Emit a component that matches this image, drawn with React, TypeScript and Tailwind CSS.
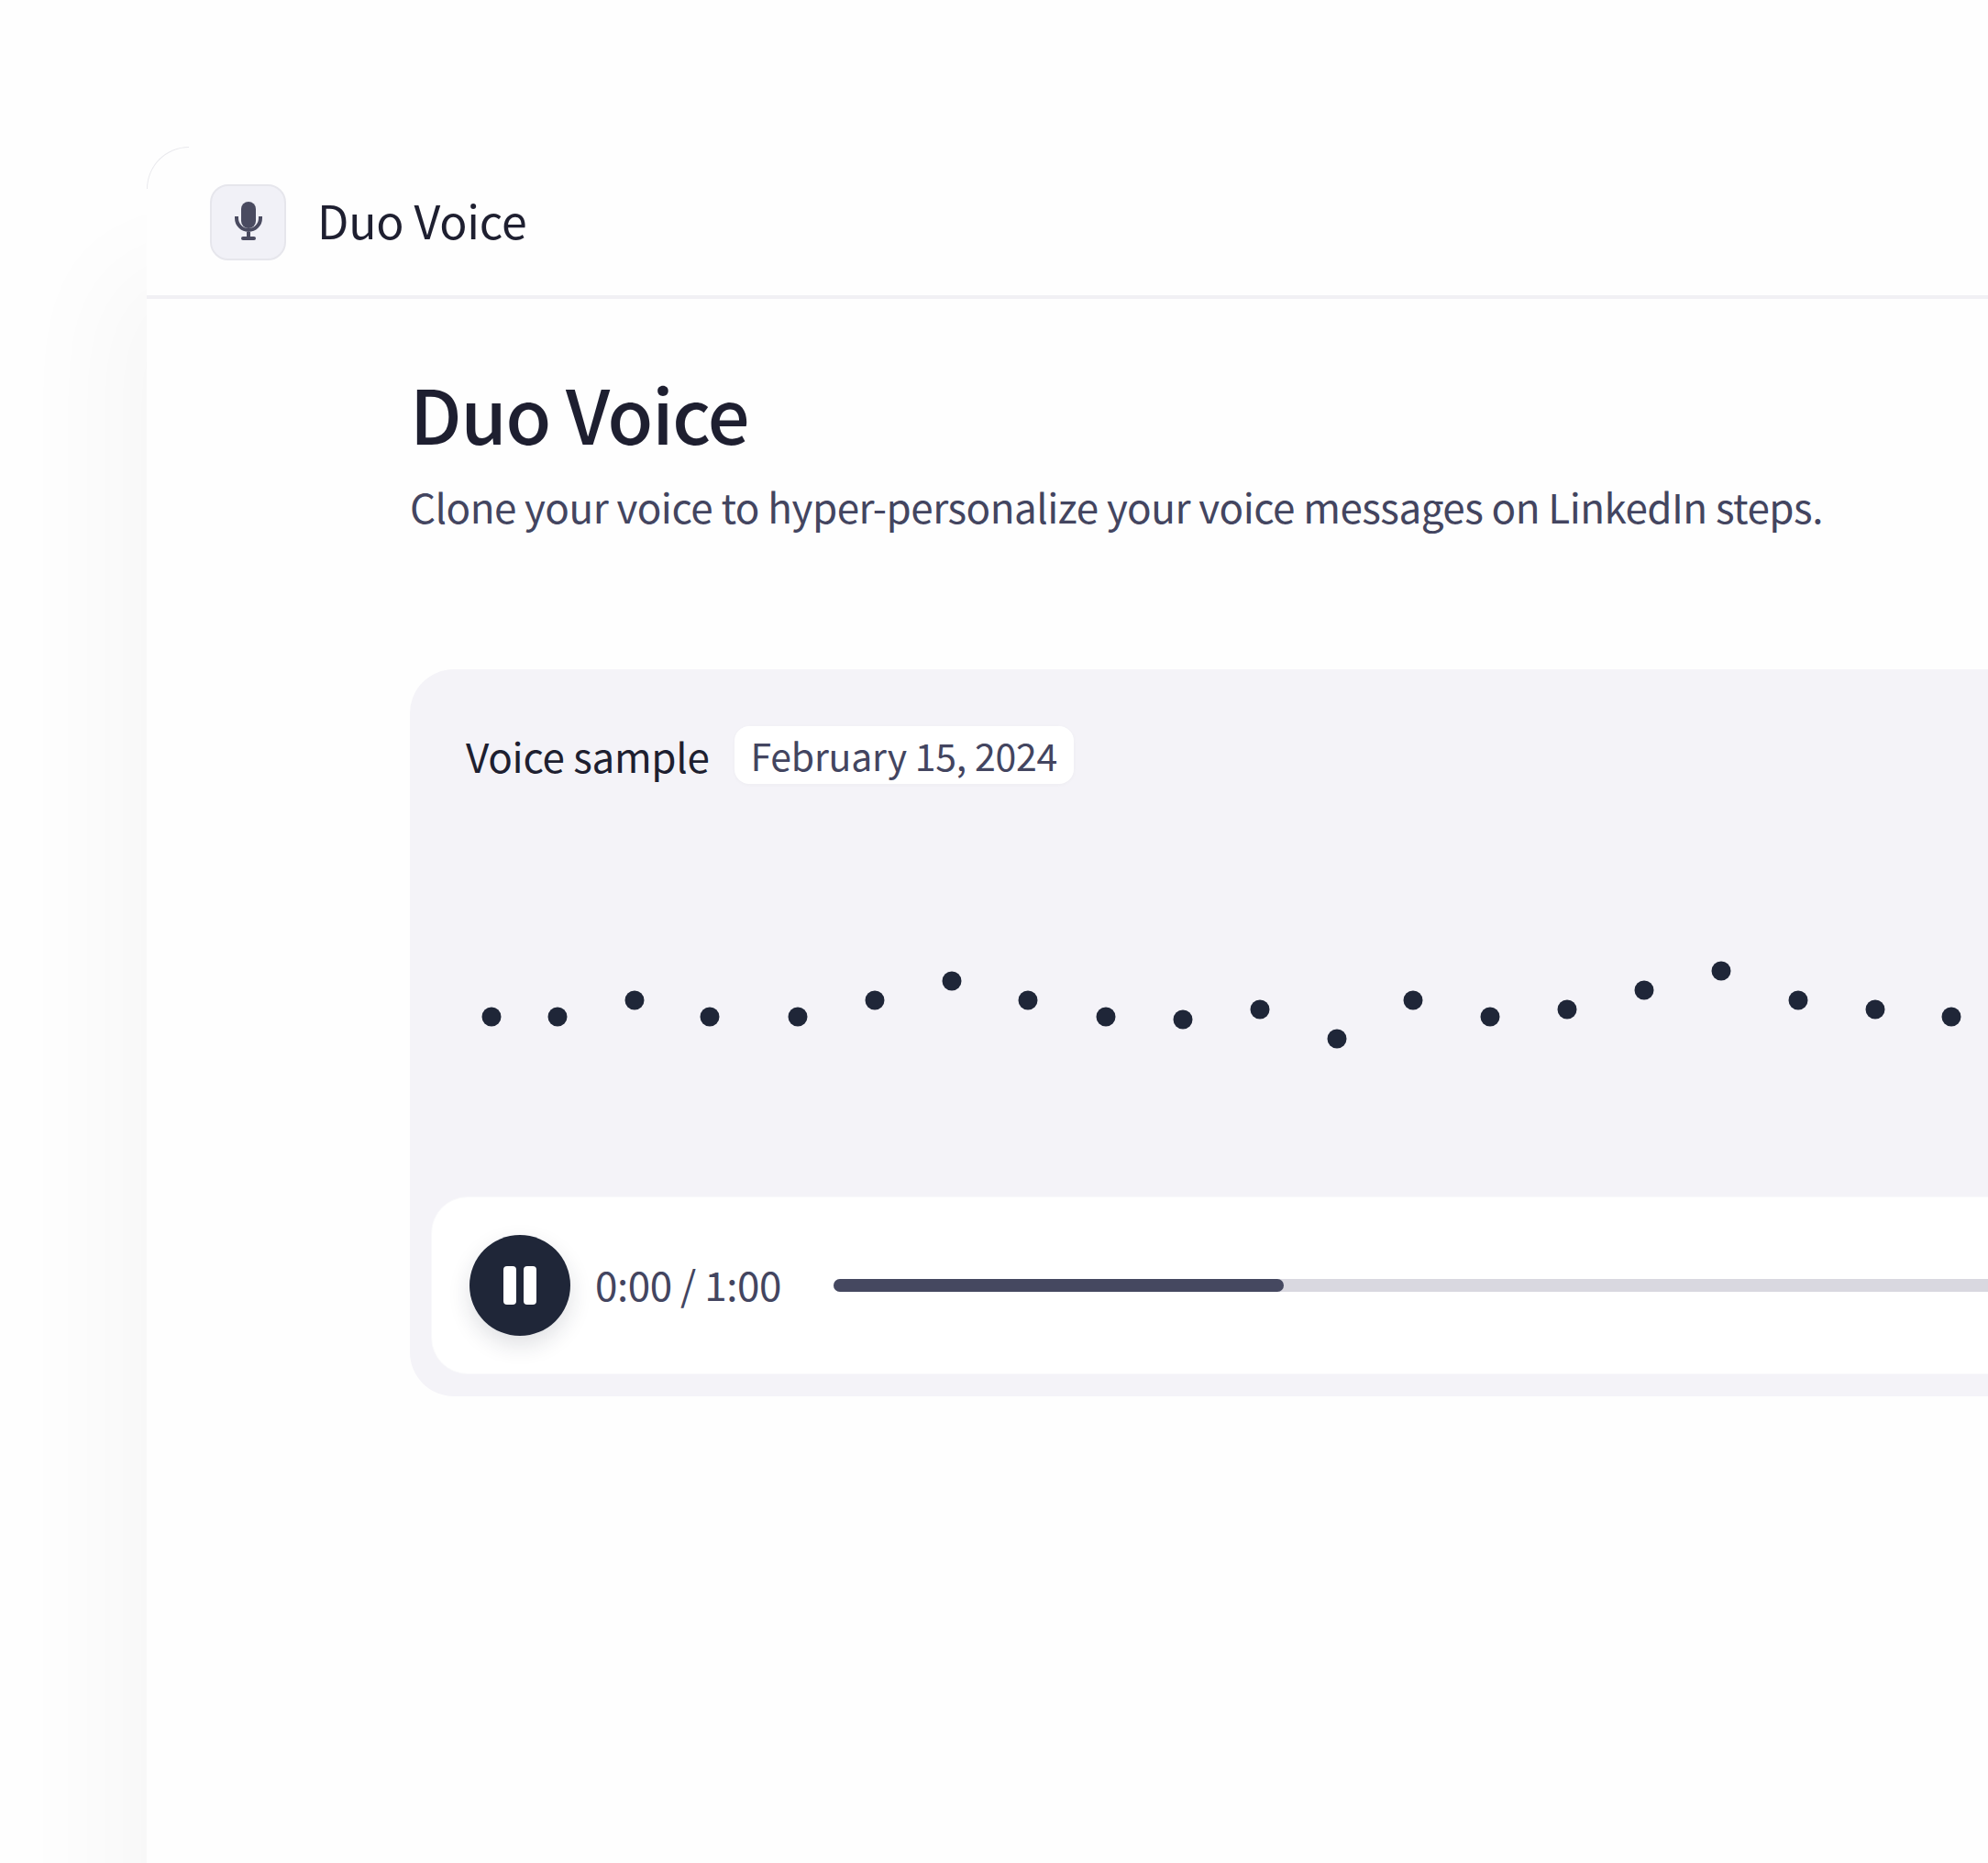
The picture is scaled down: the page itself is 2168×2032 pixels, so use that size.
const dots = [
  [536, 1109], [608, 1109], [692, 1091], [774, 1109], [870, 1109], [954, 1091], [1038, 1070],
  [1121, 1091], [1206, 1109], [1290, 1112], [1374, 1101], [1458, 1133], [1541, 1091], [1625, 1109],
  [1709, 1101], [1793, 1080], [1877, 1059], [1961, 1091], [2045, 1101], [2128, 1109],
];

function MicIcon() {
  return (
    <svg width="30" height="44" viewBox="0 0 30 44" fill="none">
      <rect x="7" y="0" width="16" height="29" rx="8" fill="#4a4b60" />
      <path d="M2 16v2a13 13 0 0 0 26 0v-2" stroke="#4a4b60" strokeWidth="4" />
      <path d="M15 33v7" stroke="#4a4b60" strokeWidth="4" />
      <rect x="7" y="38" width="16" height="4" rx="2" fill="#4a4b60" />
    </svg>
  );
}

export default function App() {
  return (
    <div className="h-[2032px] w-[2168px] overflow-hidden bg-[#fefefe] pt-[160px] pl-[160px] font-['Noto_Sans_CJK_SC','Noto_Sans',sans-serif]">
      <div className="relative h-[2200px] w-[2300px] rounded-tl-[48px] bg-[#fefefe] shadow-[-45px_130px_120px_rgba(0,0,0,0.03)]">
        {/* faint corner line */}
        <div className="absolute top-0 left-0 h-[46px] w-[46px] rounded-tl-[46px] border-t border-l border-[#e9e9ed]" />

        {/* Top bar */}
        <div className="flex h-[166px] items-center gap-[33px] border-b-4 border-[#f1f0f4] pl-[69px]">
          <div className="mt-[2px] flex h-[83px] w-[83px] items-center justify-center rounded-[20px] border-2 border-[#e6e6ec] bg-[#f1f1f7]">
            <MicIcon />
          </div>
          <span className="-mt-[4px] ml-[1px] text-[50px] leading-none tracking-[-0.2px] text-[#1e1f30]">Duo Voice</span>
        </div>

        {/* Content */}
        <div className="pt-[79px] pl-[287px]">
          <h1 className="text-[81px] leading-[90px] font-medium tracking-[-1.2px] text-[#1e1f30]">Duo Voice</h1>
          <p className="mt-[28px] text-[44px] leading-[59px] tracking-[-0.53px] text-[#434560]">
            Clone your voice to hyper-personalize your voice messages on LinkedIn steps.
          </p>

          <div className="mt-[148px] h-[793px] w-[1900px] rounded-l-[48px] bg-[#f4f3f8] pt-[62px] pl-[61px]">
            <div className="flex items-center gap-[27px]">
              <span className="text-[44px] leading-none tracking-[-0.3px] text-[#1e1f30]">Voice sample</span>
              <span className="rounded-[16px] bg-white px-[18px] py-[7px] text-[41px] leading-[49px] tracking-[-0.26px] text-[#434560] shadow-[0_1px_4px_rgba(0,0,0,0.03)]">
                February 15, 2024
              </span>
            </div>

            {/* Wave */}
            <svg className="mt-[185px] -ml-[61px]" width="1720" height="120" viewBox="447 1040 1720 120">
              {dots.map(([cx, cy]) => (
                <circle key={cx} cx={cx} cy={cy} r="10.5" fill="#1f2638" />
              ))}
            </svg>
          </div>

          {/* Player */}
          <div className="relative -mt-[218px] ml-[23px] flex h-[194px] w-[1900px] items-center rounded-l-[40px] border border-[#f9f9fb] bg-white pl-[41px]">
            <button className="flex h-[110px] w-[110px] items-center justify-center gap-[8px] rounded-full bg-[#1f2638] shadow-[0_10px_24px_rgba(31,38,56,0.14)]">
              <span className="h-[42px] w-[14px] rounded-[4px] bg-white" />
              <span className="h-[42px] w-[14px] rounded-[4px] bg-white" />
            </button>
            <span className="-mt-[4px] ml-[27px] w-[260px] text-[44px] leading-none tracking-[-0.45px] text-[#434560]">0:00 / 1:00</span>
            <div className="h-[14px] w-[1300px] rounded-full bg-[#d9d8e0]">
              <div className="h-full w-[491px] rounded-full bg-[#454860]" />
            </div>
          </div>
        </div>
      </div>
    </div>
  );
}
